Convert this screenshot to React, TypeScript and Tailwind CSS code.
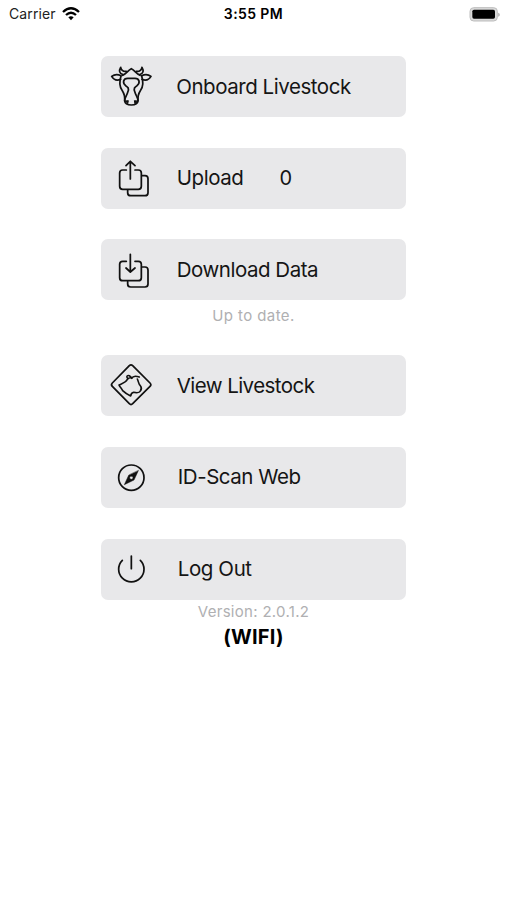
import React from 'react';

const stroke = {
  fill: 'none',
  stroke: '#111',
  strokeWidth: 5.2,
  strokeLinecap: 'round' as const,
  strokeLinejoin: 'round' as const,
};

// Every glyph is drawn on a 180x183 grid, the left end of its button
const Glyph: React.FC<{ children: React.ReactNode }> = ({ children }) => (
  <svg viewBox="0 0 180 183" className="w-[60px] h-[61px] shrink-0" {...stroke}>
    {children}
  </svg>
);

const CowIcon = () => (
  <Glyph>
    <path d="M66 56C55 53 53 44 59 34C61 43 67 47 76 46" />
    <path d="M116 56C127 53 129 44 123 34C121 43 115 47 106 46" />
    <path d="M65 58C76 53 81 43 91 38C101 43 106 53 117 58" />
    <path d="M60 59C50 54 40 55 32 61C38 71 49 74 59 70" />
    <path d="M122 59C132 54 142 55 150 61C144 71 133 74 123 70" />
    <path d="M60 60C54 79 56 94 64 104C70 113 72 120 71 134" />
    <path d="M122 60C128 79 126 94 118 104C112 113 110 120 111 134" />
    <path d="M80 109C86 97 80 93 74 89C64 81 66 67 80 67H102C116 67 118 81 108 89C102 93 96 97 102 109C104 118 111 124 111 135C110 144 101 147 91 147C81 147 72 144 71 135C71 124 78 118 80 109Z" />
    <path d="M73 135L82 134L80 144ZM109 135L100 134L102 144Z" fill="#111" strokeWidth="3" />
  </Glyph>
);

const UploadIcon = () => (
  <Glyph>
    <path d="M76 66H65Q56 66 56 75V115Q56 124 65 124H112Q121 124 121 115V75Q121 66 112 66H102" />
    <path d="M124 83H132Q141 83 141 92V134Q141 143 132 143H89Q80 143 80 134V127" />
    <path d="M88 93V40M75 53L88 40L102 53" />
  </Glyph>
);

const DownloadIcon = () => (
  <Glyph>
    <path d="M76 67H65Q56 67 56 76V116Q56 125 65 125H112Q121 125 121 116V76Q121 67 112 67H102" />
    <path d="M124 84H132Q141 84 141 93V135Q141 144 132 144H89Q80 144 80 135V128" />
    <path d="M88 46V99M75 87L88 99L102 87" />
  </Glyph>
);

const CattleSignIcon = () => (
  <Glyph>
    <path d="M85 32Q90 27 95 32L147 84Q152 89 147 94L95 146Q90 151 85 146L34 94Q29 89 34 84Z" />
    <path d="M92 69C87 67 83 69 79 73C76 82 68 84 54 90C57 97 62 100 65 107C72 114 81 119 89 123C90 117 92 113 98 112C106 114 116 113 118 108C122 103 122 97 118 92C112 87 113 80 109 72" strokeWidth="4.8" />
    <path d="M80 70C74 64 80 60 85 62C89 64 91 67 92 70C96 62 106 63 115 66" strokeWidth="4.8" />
  </Glyph>
);

const CompassIcon = () => (
  <Glyph>
    <circle cx="91" cy="92" r="38" />
    <path
      d="M112 71L99 99L70 113L83 85ZM91 87A5 5 0 1 0 91 97A5 5 0 1 0 91 87Z"
      fill="#111"
      fillRule="evenodd"
      strokeWidth="1.5"
    />
  </Glyph>
);

const PowerIcon = () => (
  <Glyph>
    <path d="M64 64A38 38 0 1 0 118 64" />
    <path d="M91 51V89" />
  </Glyph>
);

type MenuButtonProps = {
  icon: React.ReactNode;
  label: string;
  labelClass: string;
  count?: number;
};

const MenuButton: React.FC<MenuButtonProps> = ({ icon, label, labelClass, count }) => (
  <button className="flex items-center w-[305.5px] h-[61px] rounded-[7px] bg-[#e8e8ea] text-[#151515] text-[20.5px] leading-6 whitespace-nowrap">
    {icon}
    <span className={labelClass}>{label}</span>
    {count !== undefined && <span className="ml-9 w-3 text-[20px]">{count}</span>}
  </button>
);

const StatusBar = () => (
  <header className="grid grid-cols-3 items-center h-7 pl-[9px] pr-[7px] text-[14px] leading-7 text-[#222]">
    <div className="flex items-center gap-1.5">
      <span className="tracking-[0.1px]">Carrier</span>
      <svg viewBox="0 0 54 42" className="w-[18px] h-[14px]" fill="none" stroke="#000" strokeWidth="7">
        <path d="M3 15Q27 -7 51 15" />
        <path d="M12 24Q27 10 42 24" />
        <path d="M19 31Q27 24 35 31L27 40Z" fill="#000" stroke="none" />
      </svg>
    </div>
    <span className="text-center font-semibold text-black tracking-[0.4px] -ml-0.5">3:55 PM</span>
    <svg viewBox="0 0 93 45" className="w-[31px] h-[15px] justify-self-end">
      <rect x="3" y="2" width="82" height="40" rx="11" fill="#d9d9d9" stroke="#bdbdbd" strokeWidth="3" />
      <rect x="10" y="8" width="68" height="27" rx="5" fill="#000" />
      <path d="M87 17Q93 18 93 23Q93 28 87 29Z" fill="#bdbdbd" />
    </svg>
  </header>
);

export default function App() {
  return (
    <div className="min-h-screen bg-white font-[Inter,sans-serif]">
      <StatusBar />
      <main className="flex flex-col items-center pt-7">
        <div className="flex flex-col gap-[30.6px]">
          <MenuButton icon={<CowIcon />} label="Onboard Livestock" labelClass="ml-[15.5px] tracking-[-0.46px]" />
          <MenuButton icon={<UploadIcon />} label="Upload" labelClass="ml-4 tracking-[-0.45px]" count={0} />
          <MenuButton icon={<DownloadIcon />} label="Download Data" labelClass="ml-4 tracking-[-0.48px]" />
        </div>
        <p className="mt-1.5 h-5 text-[15px] leading-5 tracking-[0.4px] text-[#b0b0b2]">Up to date.</p>
        <div className="mt-[29.2px] flex flex-col gap-[30.6px]">
          <MenuButton icon={<CattleSignIcon />} label="View Livestock" labelClass="ml-4 tracking-[-0.56px]" />
          <MenuButton icon={<CompassIcon />} label="ID-Scan Web" labelClass="ml-[17px] tracking-[-0.45px]" />
          <MenuButton icon={<PowerIcon />} label="Log Out" labelClass="ml-[17px] tracking-[-0.4px]" />
        </div>
        <p className="mt-0.5 h-5 text-[15px] leading-5 tracking-[0.3px] text-[#b0b0b2]">Version: 2.0.1.2</p>
        <p className="mt-[3px] text-[20px] leading-6 font-bold tracking-[0.2px] text-black">(WIFI)</p>
      </main>
    </div>
  );
}
